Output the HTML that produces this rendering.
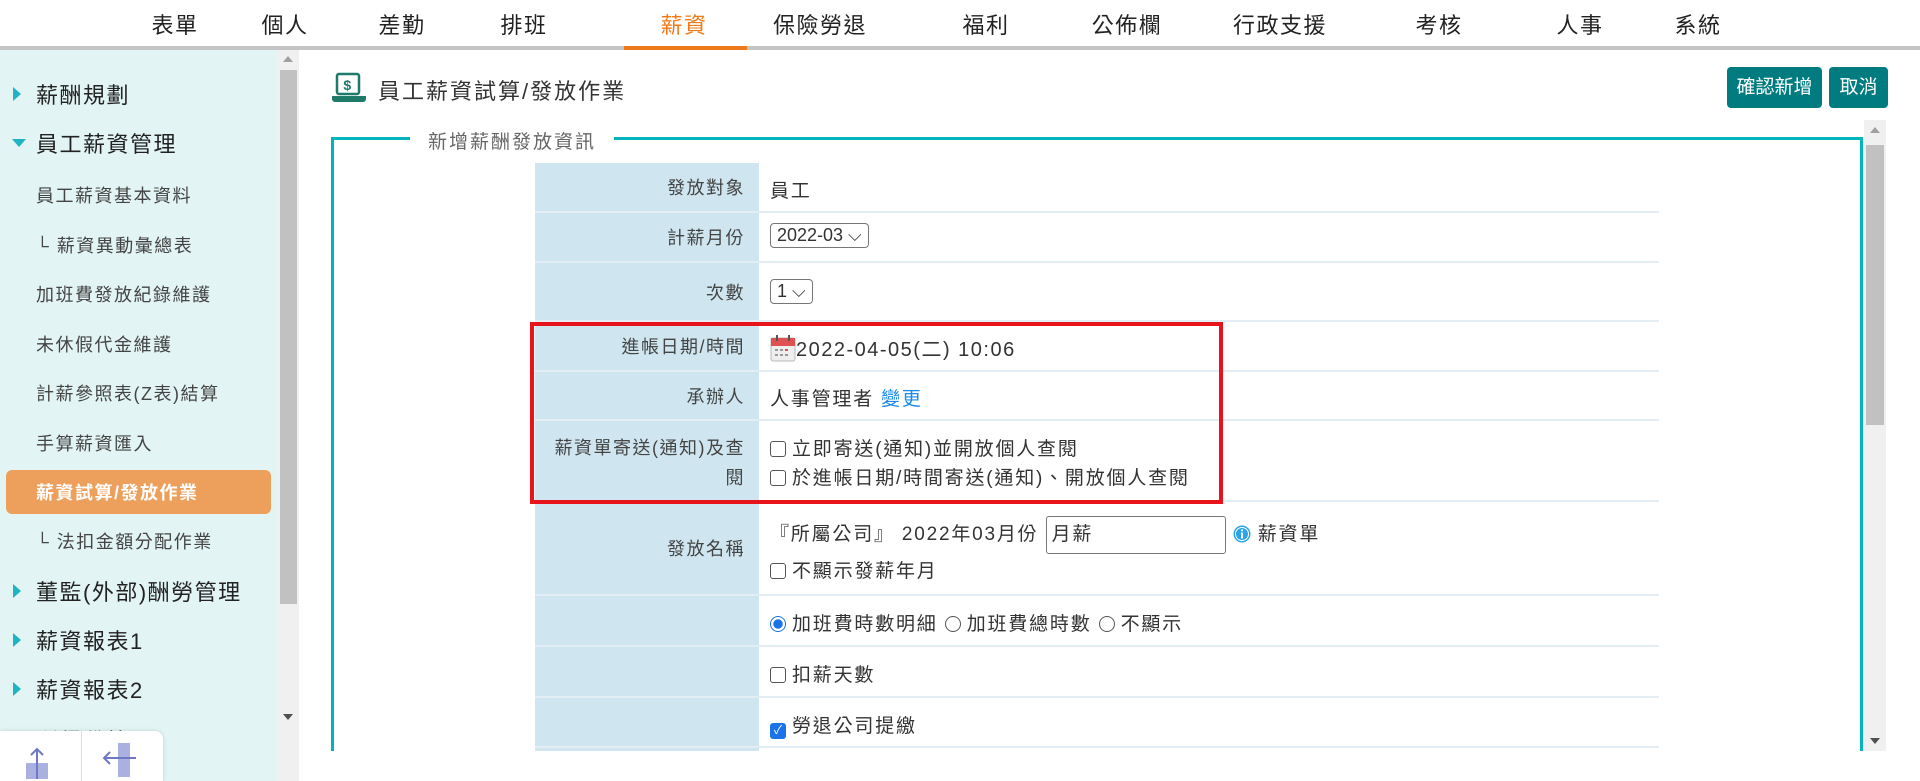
<!DOCTYPE html>
<html><head><meta charset="utf-8">
<style>
*{box-sizing:border-box;margin:0;padding:0}
body{width:1920px;height:781px;overflow:hidden;background:#fff;font-family:"Liberation Sans","Noto Sans CJK TC",sans-serif;color:#333;position:relative;letter-spacing:1.5px}
.a{position:absolute}
.nav{font-size:22px;color:#222;top:8px;transform:translateX(-50%);white-space:nowrap}
.side{left:0;top:50px;width:299px;height:731px;background:#e3f4f4}
.si{position:absolute;left:36px;font-size:18px;color:#444;transform:translateY(-50%);white-space:nowrap}
.top{position:absolute;left:36px;font-size:22px;color:#222;transform:translateY(-50%);white-space:nowrap}
.tri{position:absolute;left:13px;width:0;height:0;border-top:7px solid transparent;border-bottom:7px solid transparent;border-left:8px solid #1fb3c4;transform:translateY(-50%)}
.trid{position:absolute;left:12px;width:0;height:0;border-left:7px solid transparent;border-right:7px solid transparent;border-top:8px solid #1fb3c4;transform:translateY(-50%)}
.row{position:absolute;left:535px;width:1124px;border-bottom:2px solid #e2eef4}
.lab{position:absolute;left:0;top:0;bottom:0;width:224px;background:#cfe6f0;text-align:right;padding-right:14px;font-size:18px;color:#444;display:flex;align-items:center;justify-content:flex-end}
.val{position:absolute;left:235px;font-size:19px;letter-spacing:1.8px;color:#333;white-space:nowrap}
.cb{display:inline-block;width:16px;height:16px;border:1.5px solid #555;border-radius:3px;vertical-align:-2px;margin-right:6px}
.sel{display:inline-block;border:1px solid #777;border-radius:4px;padding:1px 6px;font-size:18px;background:#fff;letter-spacing:0}
.rad{display:inline-block;width:16px;height:16px;border:1.5px solid #555;border-radius:50%;vertical-align:-2px;margin-right:6px}
</style></head><body>
<!-- nav -->
<div class="a nav" style="left:175px">表單</div>
<div class="a nav" style="left:285px">個人</div>
<div class="a nav" style="left:402px">差勤</div>
<div class="a nav" style="left:524px">排班</div>
<div class="a nav" style="left:684px;color:#f07a1a">薪資</div>
<div class="a nav" style="left:820px">保險勞退</div>
<div class="a nav" style="left:986px">福利</div>
<div class="a nav" style="left:1127px">公佈欄</div>
<div class="a nav" style="left:1280px">行政支援</div>
<div class="a nav" style="left:1439px">考核</div>
<div class="a nav" style="left:1580px">人事</div>
<div class="a nav" style="left:1698px">系統</div>
<div class="a" style="left:0;top:46px;width:1920px;height:4px;background:#c4c4c4"></div>
<div class="a" style="left:624px;top:46px;width:123px;height:4px;background:#f07a1a"></div>

<!-- sidebar -->
<div class="a side">
 <div class="a" style="left:278px;top:0;width:21px;height:731px;background:#f0f0f0"></div>
 <div class="a" style="left:280px;top:20px;width:17px;height:534px;background:#c1c1c1"></div>
 <div class="a" style="left:283px;top:6px;border-left:5px solid transparent;border-right:5px solid transparent;border-bottom:6px solid #a0a0a0"></div>
 <div class="a" style="left:283px;top:664px;border-left:5px solid transparent;border-right:5px solid transparent;border-top:6px solid #505050"></div>
 <div class="tri" style="top:44px"></div><div class="top" style="top:44px">薪酬規劃</div>
 <div class="trid" style="top:93px"></div><div class="top" style="top:93px">員工薪資管理</div>
 <div class="si" style="top:145px">員工薪資基本資料</div>
 <div class="si" style="top:195px">└ 薪資異動彙總表</div>
 <div class="si" style="top:244px">加班費發放紀錄維護</div>
 <div class="si" style="top:294px">未休假代金維護</div>
 <div class="si" style="top:343px">計薪參照表(Z表)結算</div>
 <div class="si" style="top:393px">手算薪資匯入</div>
 <div class="a" style="left:6px;top:420px;width:265px;height:44px;background:#eda05c;border-radius:6px"></div>
 <div class="si" style="top:442px;color:#fff;font-weight:bold">薪資試算/發放作業</div>
 <div class="si" style="top:491px">└ 法扣金額分配作業</div>
 <div class="tri" style="top:541px"></div><div class="top" style="top:541px">董監(外部)酬勞管理</div>
 <div class="tri" style="top:590px"></div><div class="top" style="top:590px">薪資報表1</div>
 <div class="tri" style="top:639px"></div><div class="top" style="top:639px">薪資報表2</div>
 <div class="top" style="top:690px;color:#555">所得稅管理</div>
 <div class="a" style="left:0;top:681px;width:163px;height:50px;background:#fff;border-radius:0 8px 0 0;box-shadow:0 0 4px rgba(0,0,0,.15)">
  <div class="a" style="left:81px;top:0;width:1px;height:50px;background:#ddd"></div>
  <svg class="a" style="left:18px;top:12px" width="46" height="38" viewBox="0 0 46 38"><rect x="8" y="20" width="22" height="16" fill="#aab0e0"/><path d="M19 36V6M13 12l6-6 6 6" stroke="#6f78c8" stroke-width="2" fill="none"/></svg>
  <svg class="a" style="left:100px;top:10px" width="46" height="38" viewBox="0 0 46 38"><rect x="18" y="2" width="12" height="34" fill="#aab0e0"/><path d="M4 17h32M10 11l-6 6 6 6" stroke="#6f78c8" stroke-width="2" fill="none"/></svg>
 </div>
</div>

<!-- main header -->
<svg class="a" style="left:331px;top:72px" width="36" height="32" viewBox="0 0 36 32"><rect x="6" y="2" width="22" height="20" rx="2" fill="none" stroke="#1f7a6a" stroke-width="2.5"/><text x="17" y="18" text-anchor="middle" font-size="14" font-weight="bold" fill="#1f7a6a" font-family="Liberation Sans">$</text><path d="M1 24h34v3a3 3 0 0 1-3 3H4a3 3 0 0 1-3-3z" fill="#1f7a6a"/></svg>
<div class="a" style="left:378px;top:74px;font-size:22px;color:#333;letter-spacing:2px">員工薪資試算/發放作業</div>
<div class="a" style="left:1727px;top:67px;width:95px;height:41px;background:#007b80;border-radius:4px;color:#fff;font-size:19px;text-align:center;line-height:41px;letter-spacing:0">確認新增</div>
<div class="a" style="left:1829px;top:67px;width:59px;height:41px;background:#007b80;border-radius:4px;color:#fff;font-size:19px;text-align:center;line-height:41px;letter-spacing:0">取消</div>

<!-- fieldset -->
<div class="a" style="left:331px;top:137px;width:1532px;height:640px;border:3px solid #00b4bd;border-bottom:none"></div>
<div class="a" style="left:410px;top:127px;padding:0 18px;background:#fff;font-size:19px;color:#666;letter-spacing:2px">新增薪酬發放資訊</div>
<div class="a" style="left:1864px;top:120px;width:22px;height:631px;background:#f0f0f0"></div>
<div class="a" style="left:1866px;top:145px;width:18px;height:280px;background:#c1c1c1"></div>
<div class="a" style="left:1870px;top:127px;border-left:5px solid transparent;border-right:5px solid transparent;border-bottom:6px solid #a0a0a0"></div>
<div class="a" style="left:1870px;top:738px;border-left:5px solid transparent;border-right:5px solid transparent;border-top:6px solid #505050"></div>

<!-- table -->
<div class="row" style="top:163px;height:50px"><div class="lab">發放對象</div><div class="val" style="top:13px">員工</div></div>
<div class="row" style="top:213px;height:50px"><div class="lab">計薪月份</div><div class="val" style="top:10px"><span class="sel">2022-03 ⌵</span></div></div>
<div class="row" style="top:263px;height:59px"><div class="lab">次數</div><div class="val" style="top:16px"><span class="sel">1 ⌵</span></div></div>
<div class="row" style="top:322px;height:50px"><div class="lab">進帳日期/時間</div><div class="val" style="top:11px"><svg width="26" height="28" viewBox="0 0 26 28" style="vertical-align:-6px"><rect x="1" y="4" width="24" height="23" rx="2" fill="#eee" stroke="#bbb"/><rect x="1" y="4" width="24" height="8" fill="#e05050"/><rect x="6" y="1" width="2" height="6" fill="#555"/><rect x="18" y="1" width="2" height="6" fill="#555"/><g fill="#999"><rect x="5" y="15" width="3" height="2"/><rect x="10" y="15" width="3" height="2"/><rect x="15" y="15" width="3" height="2" fill="#e05050"/><rect x="5" y="20" width="3" height="2"/><rect x="10" y="20" width="3" height="2"/><rect x="15" y="20" width="3" height="2"/></g></svg><span style="font-size:20px;letter-spacing:1.5px">2022-04-05(二) 10:06</span></div></div>
<div class="row" style="top:372px;height:49px"><div class="lab">承辦人</div><div class="val" style="top:12px">人事管理者 <span style="color:#1a88e8">變更</span></div></div>
<div class="row" style="top:421px;height:81px"><div class="lab" style="line-height:30px;text-align:right;display:block;padding-top:12px">薪資單寄送(通知)及查<br>閱</div><div class="val" style="top:14px;line-height:29px"><span class="cb"></span>立即寄送(通知)並開放個人查閱<br><span class="cb"></span>於進帳日期/時間寄送(通知)、開放個人查閱</div></div>
<div class="row" style="top:502px;height:94px"><div class="lab">發放名稱</div><div class="val" style="top:14px;line-height:36px">『所屬公司』 2022年03月份 <span style="display:inline-block;width:180px;height:38px;border:1px solid #777;border-radius:3px;vertical-align:middle;padding-left:5px;line-height:36px">月薪</span> <svg width="18" height="18" viewBox="0 0 18 18" style="vertical-align:-3px"><circle cx="9" cy="9" r="8.5" fill="#2aa4e8"/><circle cx="9" cy="9" r="6.5" fill="none" stroke="#fff" stroke-width="1"/><rect x="8" y="7.5" width="2" height="6" fill="#fff"/><circle cx="9" cy="5.3" r="1.1" fill="#fff"/></svg> 薪資單<br><span class="cb"></span>不顯示發薪年月</div></div>
<div class="row" style="top:596px;height:51px"><div class="lab"></div><div class="val" style="top:13px"><span class="rad" style="border-color:#1a73e8;background:radial-gradient(#1a73e8 45%,#fff 50%)"></span>加班費時數明細 <span class="rad"></span>加班費總時數 <span class="rad"></span>不顯示</div></div>
<div class="row" style="top:647px;height:51px"><div class="lab"></div><div class="val" style="top:13px"><span class="cb"></span>扣薪天數</div></div>
<div class="row" style="top:698px;height:50px"><div class="lab"></div><div class="val" style="top:13px"><span class="cb" style="background:#1a73e8;border-color:#1a73e8;color:#fff;font-size:12px;line-height:13px;text-align:center;letter-spacing:0">✓</span>勞退公司提繳</div></div>
<div class="a" style="left:535px;top:748px;width:224px;height:3px;background:#cfe6f0"></div>
<div class="a" style="left:300px;top:751px;width:1620px;height:30px;background:#fff"></div>

<!-- red box -->
<div class="a" style="left:530px;top:322px;width:693px;height:182px;border:4px solid #e8141c"></div>
</body></html>
